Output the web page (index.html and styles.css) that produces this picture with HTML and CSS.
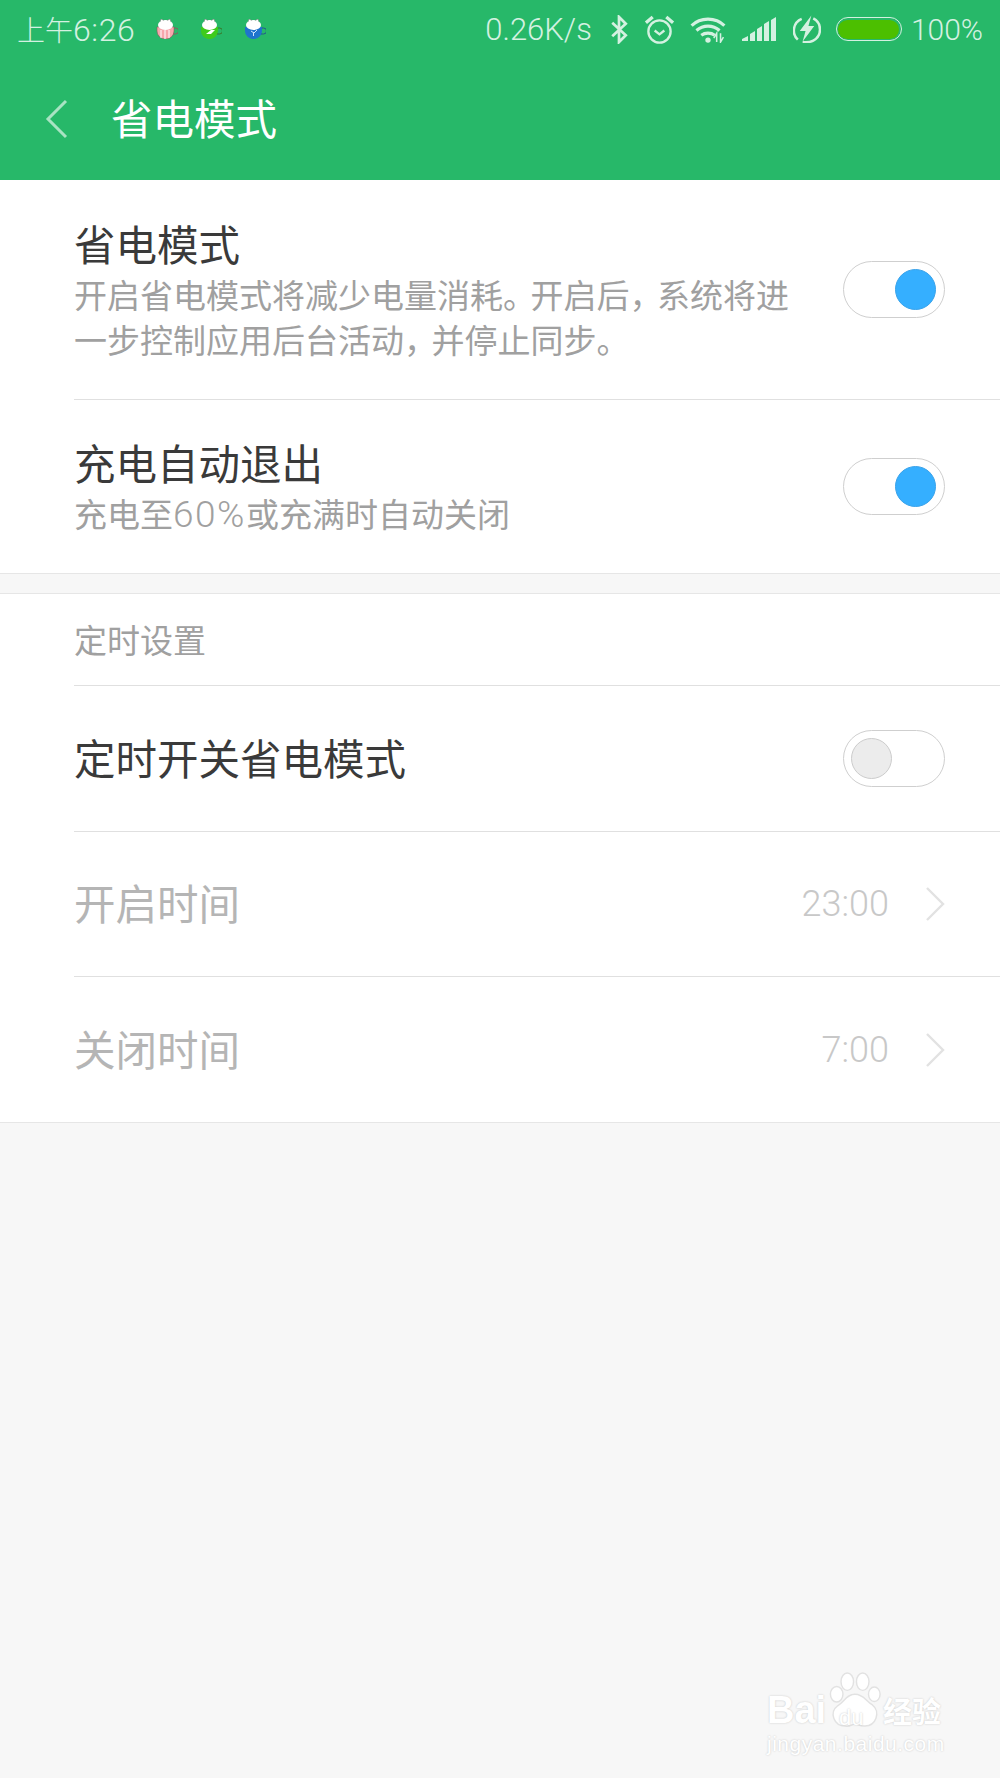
FILE: index.html
```html
<!DOCTYPE html>
<html lang="zh-CN">

<head>
  <meta charset="UTF-8" />
  <meta name="viewport" content="width=device-width, initial-scale=1.0" />
  <title>省电模式</title>
  <link rel="stylesheet" href="styles.css">
</head>

<body>

  <header class="topbar">
    <div class="status">
      <span class="status-time">上午<b>6:26</b></span>
      <div class="cups">
        <svg class="cup" viewBox="0 0 22 20"><path d="M1 8h17v4a8 8 0 0 1-8.500 8A8 8 0 0 1 1 12z" fill="#f7a6ac" stroke="#8a5a60" stroke-width=".6"/><path d="M18 9h1.500a2.500 2.500 0 0 1 0 6H17" fill="none" stroke="#8a5a60" stroke-width="1"/><path d="M5 11v8M9 11v9M13 11v8" stroke="#fff" stroke-width="1"/><ellipse cx="9.500" cy="6" rx="7.500" ry="5" fill="#fff"/><path d="M4 3l1-3 3 1.500M11 1.500L14 0l1 3" fill="#fff" stroke="#777" stroke-width=".5"/></svg>
        <svg class="cup" viewBox="0 0 22 20"><path d="M1 8h17v4a8 8 0 0 1-8.500 8A8 8 0 0 1 1 12z" fill="#3ecb1c"/><path d="M18 9h1.500a2.500 2.500 0 0 1 0 6H17" fill="none" stroke="#3a7a2c" stroke-width="1"/><path d="M6 15l5-4h4l-4 4z" fill="#fff"/><ellipse cx="9.500" cy="6" rx="7.500" ry="5" fill="#fff"/><path d="M4 3l1-3 3 1.500M11 1.500L14 0l1 3" fill="#fff" stroke="#777" stroke-width=".5"/></svg>
        <svg class="cup" viewBox="0 0 22 20"><path d="M1 8h17v4a8 8 0 0 1-8.500 8A8 8 0 0 1 1 12z" fill="#1f74cc"/><path d="M18 9h1.500a2.500 2.500 0 0 1 0 6H17" fill="none" stroke="#24588c" stroke-width="1"/><path d="M7 12l3 2 3-3M9.500 14v3" stroke="#cfe6ff" stroke-width="1" fill="none"/><ellipse cx="9.500" cy="6" rx="7.500" ry="5" fill="#fff"/><path d="M4 3l1-3 3 1.500M11 1.500L14 0l1 3" fill="#fff" stroke="#777" stroke-width=".5"/></svg>
      </div>
      <span class="status-speed">0.26K/s</span>
      <svg class="ic-bt" viewBox="0 0 20 30"><path d="M3 8l14 13-7 7V2l7 7L3 22" fill="none" stroke="currentColor" stroke-width="2.800"/></svg>
      <svg class="ic-alarm" viewBox="0 0 32 32"><circle cx="16" cy="18" r="11.500" fill="none" stroke="currentColor" stroke-width="2.400"/><path d="M11 17l5 4 5-4" fill="none" stroke="currentColor" stroke-width="2.400"/><path d="M2 9l7-6M30 9l-7-6" fill="none" stroke="currentColor" stroke-width="3.400"/></svg>
      <svg class="ic-wifi" viewBox="0 0 36 28"><path d="M1 10C10 1 26 1 35 10M6 15c7-6 17-6 24 0M11 20c4-3 10-3 14 0" fill="none" stroke="currentColor" stroke-width="3.200"/><circle cx="18" cy="25" r="2.800" fill="currentColor"/><path d="M27 27v-9l-3 5M31 18v9l3-5" fill="none" stroke="currentColor" stroke-width="1.600"/></svg>
      <svg class="ic-signal" viewBox="0 0 35 24"><path d="M0 24v-2l6-3v5zM8 24v-7l5-3v10zM15 24V12l5-3v15zM22 24V7l5-3v20zM29 24V3l5-3v24z" fill="currentColor"/></svg>
      <svg class="ic-charge" viewBox="0 0 29 28"><path d="M9 3.500a13 13 0 0 0-4 21.500M21 3a13 13 0 0 1 0 23c-3 1.500-7 2-11 1.500" fill="none" stroke="currentColor" stroke-width="2.600"/><path d="M19 0L7 16h6l-3 11 12-16h-6z" fill="currentColor"/></svg>
      <div class="battery"><div class="battery-fill"></div></div>
      <span class="status-pct">100%</span>
    </div>
    <div class="toolbar">
      <svg class="back" viewBox="0 0 24 40"><path d="M21 2L3 20l18 18" fill="none" stroke="#a9e3c3" stroke-width="3"/></svg>
      <h1>省电模式</h1>
    </div>
  </header>

  <section class="group">
    <div class="row row-first">
      <div class="row-text">
        <div class="row-title">省电模式</div>
        <div class="row-sub">开启省电模式将减少电量消耗<span class="punct">。</span>开启后<span class="punct">，</span>系统将进<br>一步控制应用后台活动<span class="punct">，</span>并停止同步。</div>
      </div>
      <div class="switch on"><div class="knob"></div></div>
    </div>
    <div class="row row-second">
      <div class="row-text">
        <div class="row-title">充电自动退出</div>
        <div class="row-sub">充电至<span class="num">60%</span>或充满时自动关闭</div>
      </div>
      <div class="switch on"><div class="knob"></div></div>
    </div>
  </section>

  <section class="group group-timer">
    <div class="row row-head">定时设置</div>
    <div class="row row-plain">
      <div class="row-title">定时开关省电模式</div>
      <div class="switch"><div class="knob"></div></div>
    </div>
    <div class="row row-plain row-off">
      <div class="row-title">开启时间</div>
      <span class="row-value">23:00</span>
      <svg class="chevron" viewBox="0 0 20 36"><path d="M2 2l16 16L2 34" fill="none" stroke="#e2e2e2" stroke-width="2.400"/></svg>
    </div>
    <div class="row row-plain row-off">
      <div class="row-title">关闭时间</div>
      <span class="row-value">7:00</span>
      <svg class="chevron" viewBox="0 0 20 36"><path d="M2 2l16 16L2 34" fill="none" stroke="#e2e2e2" stroke-width="2.400"/></svg>
    </div>
  </section>

  <div class="watermark">
    <div class="wm-logo">
      <span class="wm-word">Bai</span>
      <svg class="wm-paw" viewBox="0 0 56 58">
        <g fill="#fff" stroke="#e2e2e2" stroke-width="1.500">
          <ellipse cx="9" cy="23" rx="6.500" ry="8"/>
          <ellipse cx="20" cy="10" rx="6.500" ry="9"/>
          <ellipse cx="36" cy="10" rx="6.500" ry="9"/>
          <ellipse cx="48" cy="23" rx="6" ry="7.500"/>
          <path d="M28 23c9 0 11 7 18 11 9 7 4 23-9 22-4 0-6-2-9-2s-5 3-10 2C6 56 1 42 10 35c7-4 9-12 18-12z"/>
        </g>
      </svg>
      <span class="wm-du">du</span>
      <span class="wm-cn">经验</span>
    </div>
    <div class="wm-url">jingyan.baidu.com</div>
  </div>

</body>

</html>
```

FILE: styles.css
```css
body {
  position: relative;
  margin: 0;
  height: 1778px;
  overflow: hidden;
  background-color: #f7f7f7;
  font-family: "Noto Sans CJK SC", "Noto Sans", sans-serif;
  color: #3a3a3a;
}

/* Barra verde */
.topbar {
  height: 180px;
  background-color: #27b869;
}

.status {
  display: flex;
  align-items: center;
  height: 58px;
  padding: 0 17px 0 17px;
  color: #d4f1e1;
  font-size: 28px;
  font-weight: 300;
}

.status-time {
  width: 139px;
  white-space: nowrap;
}

.status-time b {
  font-family: "Roboto", sans-serif;
  font-size: 32px;
  font-weight: 300;
  letter-spacing: 0.600px;
}

.cups {
  display: flex;
  gap: 22px;
}

.cup {
  width: 22px;
  height: 20px;
}

.status-speed {
  margin-left: auto;
  margin-right: 17px;
  font-family: "Roboto", sans-serif;
  font-size: 31px;
}

.ic-bt {
  width: 20px;
  height: 29px;
  margin-right: 15px;
}

.ic-alarm {
  width: 31px;
  height: 31px;
  margin-right: 15px;
}

.ic-wifi {
  width: 36px;
  height: 27px;
  margin-right: 16px;
}

.ic-signal {
  width: 35px;
  height: 24px;
  margin-right: 16px;
}

.ic-charge {
  width: 28px;
  height: 28px;
  margin-right: 15px;
}

.battery {
  box-sizing: border-box;
  width: 66px;
  height: 24px;
  margin-right: 9px;
  padding: 1.500px;
  border: 1.500px solid #d4f1e1;
  border-radius: 12px;
}

.battery-fill {
  height: 100%;
  border-radius: 10px;
  background-color: #4cbf00;
}

.status-pct {
  font-family: "Roboto", sans-serif;
  font-size: 30px;
}

.toolbar {
  display: flex;
  align-items: center;
  height: 122px;
  padding-left: 45px;
}

.back {
  width: 24px;
  height: 40px;
}

h1 {
  margin: 0 0 0 42px;
  padding-bottom: 4px;
  color: #fff;
  font-size: 41.500px;
  font-weight: 400;
}

/* Listas */
.group {
  padding-left: 74px;
  background-color: #fff;
  border-bottom: 1px solid #e6e6e6;
}

.group-timer {
  margin-top: 19px;
  border-top: 1px solid #e6e6e6;
}

.row {
  box-sizing: border-box;
  display: flex;
  align-items: center;
  padding-right: 55px;
  border-bottom: 1px solid #e0e0e0;
}

.row:last-child {
  border-bottom: none;
}

.row-first {
  height: 220px;
}

.row-second {
  height: 173px;
}

.row-head {
  height: 92px;
  padding-bottom: 2px;
  color: #a0a0a0;
  font-size: 33px;
}

.row-plain {
  height: 146px;
}

.row-off {
  height: 145px;
}

.row-text {
  flex: 1;
  min-width: 0;
  padding-bottom: 3px;
}

.row-title {
  font-size: 41.500px;
  line-height: 58px;
}

.row-plain .row-title {
  flex: 1;
  padding-bottom: 4px;
}

.row-sub {
  color: #a0a0a0;
  font-size: 33px;
  line-height: 45px;
  white-space: nowrap;
}

.punct {
  margin-right: 11px;
  font-feature-settings: "halt";
}

.num {
  font-family: "Roboto", sans-serif;
  font-size: 37px;
  font-weight: 300;
  letter-spacing: 1.500px;
}

.row-off .row-title {
  color: #b5b5b5;
}

.row-value {
  margin-right: 36px;
  color: #c8c8c8;
  font-family: "Roboto", sans-serif;
  font-size: 36px;
  font-weight: 300;
}

.chevron {
  width: 20px;
  height: 36px;
}

/* Interruptor */
.switch {
  box-sizing: border-box;
  display: flex;
  align-items: center;
  flex: none;
  width: 102px;
  height: 57px;
  padding: 0 8px 0 7px;
  background-color: #fff;
  border: 1px solid #cfcfcf;
  border-radius: 29px;
}

.switch.on {
  justify-content: flex-end;
}

.knob {
  box-sizing: border-box;
  width: 41px;
  height: 41px;
  background-color: #ececec;
  border: 1px solid #cccccc;
  border-radius: 50%;
}

.switch.on .knob {
  background-color: #35afff;
  border-color: #3ba3ea;
}

/* Marca d'agua */
.watermark {
  position: absolute;
  top: 1672px;
  left: 767px;
  width: 185px;
  color: #fff;
  text-shadow: 0 0 2px #c4c4c4;
}

.wm-logo {
  display: flex;
  align-items: flex-end;
  height: 56px;
}

.wm-word {
  width: 61px;
  font-family: "Liberation Sans", sans-serif;
  font-size: 38px;
  font-weight: 700;
  line-height: 36px;
}

.wm-paw {
  flex: none;
  width: 54px;
  height: 56px;
}

.wm-du {
  position: absolute;
  left: 72px;
  top: 33px;
  color: #fff;
  font-family: "Liberation Sans", sans-serif;
  font-size: 22px;
}

.wm-cn {
  margin-left: 1px;
  font-size: 29px;
  font-weight: 700;
  line-height: 36px;
}

.wm-url {
  margin-top: 4px;
  font-family: "Liberation Sans", sans-serif;
  font-size: 21px;
  letter-spacing: 0.500px;
  white-space: nowrap;
}
```
